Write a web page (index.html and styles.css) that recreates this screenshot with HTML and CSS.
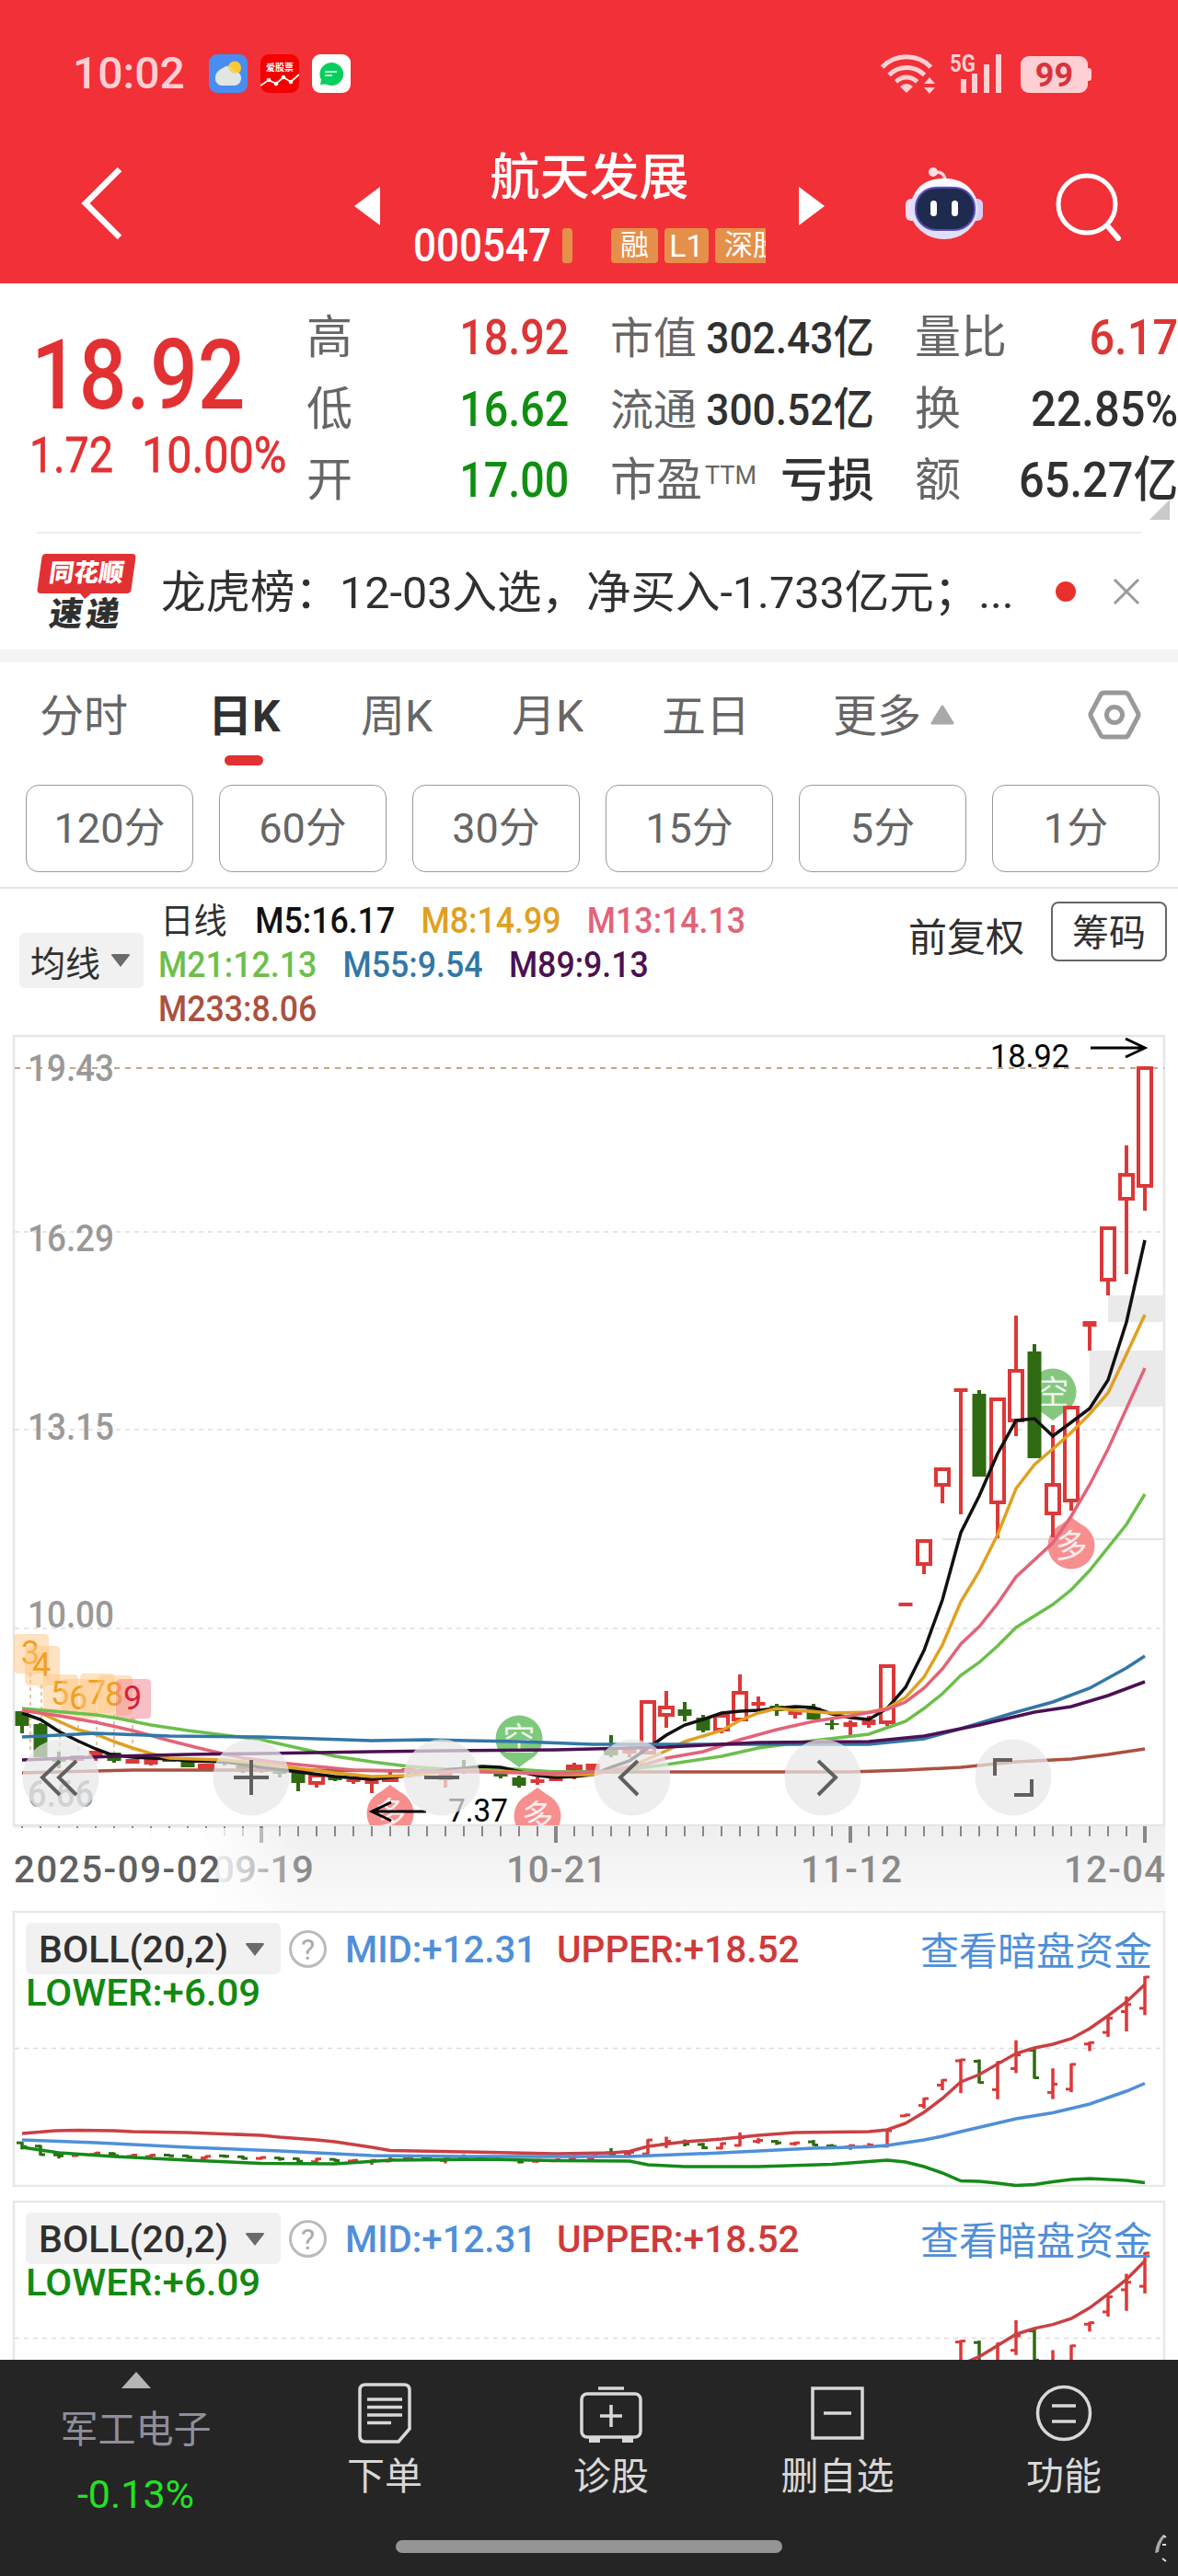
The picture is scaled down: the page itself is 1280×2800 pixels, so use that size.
FILE: index.html
```html
<!DOCTYPE html>
<html lang="zh-CN">

<head>
    <meta charset="UTF-8">
    <meta name="viewport" content="width=device-width, initial-scale=1.0">
    <title>航天发展 000547</title>
    <link rel="stylesheet" href="styles.css">
</head>

<body>

    <header class="top">
        <div class="status">
            <span class="time">10:02</span>
            <svg class="app" viewBox="0 0 42 42">
                <rect width="42" height="42" rx="9" fill="#4a8df0" />
                <circle cx="28" cy="15" r="7" fill="#fdc51f" />
                <path d="M13 34a8 8 0 0 1-6-9c0-5 4-8 8-10 6-5 13-1 13 4 5 0 7 3 7 7s-3 8-7 8z" fill="#dfe6e4" />
                <path d="M21 14a7 7 0 0 1 13-3c2 5-1 8-3 9-5 2-9-1-10-6z" fill="#fcca3a" opacity=".75" />
            </svg>
            <svg class="app" viewBox="0 0 42 42">
                <rect width="42" height="42" rx="9" fill="#f40000" />
                <text x="21" y="17.500" text-anchor="middle" class="app-text">爱股票</text>
                <path d="M0 34l9-6 8 4 8-7 8 5 9-8" fill="none" stroke="#fff" stroke-width="1.800" />
                <circle cx="9" cy="28" r="2.300" fill="#fff" />
                <circle cx="17" cy="32" r="2.300" fill="#fff" />
                <circle cx="25" cy="25" r="2.300" fill="#fff" />
                <circle cx="33" cy="30" r="2.300" fill="#fff" />
            </svg>
            <svg class="app" viewBox="0 0 42 42">
                <rect width="42" height="42" rx="9" fill="#fff" />
                <path d="M21 9a13 12.500 0 1 1-6 23.500L9 33l1-5.500A13 12.500 0 0 1 21 9z" fill="#07cf5c" />
                <path d="M14 19h13M14 23h8" stroke="#fff" stroke-width="1.600" />
            </svg>
            <div class="status-right">
                <svg width="60" height="44" viewBox="0 0 60 44" fill="none" stroke="#ffcfd3" stroke-width="5">
                    <path d="M2.500 15a37 37 0 0 1 53 0M10 23.500a27 27 0 0 1 38.500 0M17.500 31a16 16 0 0 1 23 0" />
                    <path d="M29 43l-7-7q7-6 14 0z" fill="#ffcfd3" stroke="none" />
                    <path d="M54 26l6 7H48zM54 44l6-7H48z" fill="#ffcfd3" stroke="none" />
                </svg>
                <svg class="signal" width="58" height="44" viewBox="0 0 58 44" fill="#ffcfd3">
                    <text x="0" y="20" textLength="28" lengthAdjust="spacingAndGlyphs" class="signal-text">5G</text>
                    <path d="M12 28h6v15h-6zM24 22h6v21h-6zM37 12h6v31h-6zM50 1h6v42h-6z" />
                </svg>
                <span class="battery">99</span>
            </div>
        </div>

        <div class="nav">
            <svg class="back" width="46" height="80" viewBox="0 0 46 80">
                <path d="M42 3L5 40l37 37" fill="none" stroke="#fff" stroke-width="6.500" />
            </svg>
            <svg class="prev" width="28" height="44" viewBox="0 0 28 44"><path d="M0 22L28 1v42z" fill="#fff" /></svg>
            <div class="stock">
                <div class="stock-name">航天发展</div>
                <div class="stock-sub">
                    <span class="code">000547</span>
                    <i class="tag-bar"></i>
                    <div class="tags">
                        <span class="tag">融</span>
                        <span class="tag tag-l1">L1</span>
                        <span class="tag">深股通</span>
                    </div>
                </div>
            </div>
            <svg class="next" width="28" height="44" viewBox="0 0 28 44"><path d="M28 22L0 1v42z" fill="#fff" /></svg>
            <svg class="robot" width="84" height="78" viewBox="0 0 84 78">
                <path d="M30 6q12-3 13 8" fill="none" stroke="#fbd3e0" stroke-width="3.500" />
                <circle cx="30" cy="5" r="5" fill="#fbe0e8" />
                <rect x="0" y="34" width="16" height="24" rx="6" fill="#f3dcf2" />
                <rect x="68" y="34" width="16" height="24" rx="6" fill="#d9cdf6" />
                <ellipse cx="42" cy="45" rx="37" ry="33" fill="#dfdff9" />
                <path d="M8 33C14 16 28 12 42 12s28 5 34 21C67 24 56 20 42 20S17 24 8 33z" fill="#fbf8ff" />
                <rect x="11" y="22" width="64" height="46" rx="22" fill="#1f2b4e" stroke="#5a49b8" stroke-width="2" />
                <rect x="27" y="36" width="7" height="17" rx="3.500" fill="#fff" />
                <rect x="50" y="36" width="7" height="17" rx="3.500" fill="#fff" />
            </svg>
            <svg class="search" width="74" height="76" viewBox="0 0 74 76" fill="none" stroke="#fff" stroke-width="5">
                <circle cx="34" cy="36" r="31" />
                <path d="M56 59l12 14" stroke-width="6" stroke-linecap="round" />
            </svg>
        </div>
    </header>

    <section class="quote">
        <div class="price-box">
            <div class="price"><span class="din">18.92</span></div>
            <div class="change"><span class="din chg">1.72</span><span class="din pct">10.00%</span></div>
        </div>
        <div class="col">
            <div class="row"><span class="lab">高</span><b class="din up">18.92</b></div>
            <div class="row"><span class="lab">低</span><b class="din down">16.62</b></div>
            <div class="row"><span class="lab">开</span><b class="din down">17.00</b></div>
        </div>
        <div class="col mid">
            <div class="row"><span class="lab">市值</span><b class="din">302.43亿</b></div>
            <div class="row"><span class="lab">流通</span><b class="din">300.52亿</b></div>
            <div class="row"><span class="lab big">市盈<small>TTM</small></span><b class="loss">亏损</b></div>
        </div>
        <div class="col last">
            <div class="row"><span class="lab">量比</span><b class="din up">6.17</b></div>
            <div class="row"><span class="lab">换</span><b class="din">22.85%</b></div>
            <div class="row"><span class="lab">额</span><b class="din">65.27亿</b></div>
        </div>
        <svg class="corner" width="22" height="22" viewBox="0 0 22 22"><path d="M22 0v22H0z" fill="#c9c9c9" /></svg>
    </section>

    <section class="news">
        <div class="ths">
            <div class="ths-top">同花顺</div>
            <div class="ths-bottom">速递</div>
        </div>
        <p class="news-text">龙虎榜：12-03入选，净买入-1.733亿元；...</p>
        <i class="dot"></i>
        <svg class="close" width="30" height="30" viewBox="0 0 30 30">
            <path d="M2 2l26 26M28 2L2 28" stroke="#999" stroke-width="3" />
        </svg>
    </section>

    <nav class="tabs">
        <span class="tab">分时</span>
        <span class="tab active">日K</span>
        <span class="tab">周K</span>
        <span class="tab">月K</span>
        <span class="tab">五日</span>
        <span class="tab">更多<svg width="26" height="22" viewBox="0 0 26 22"><path d="M13 2l11 18H2z" fill="#a9a9a9" stroke="#a9a9a9" stroke-width="3" stroke-linejoin="round" /></svg></span>
        <svg class="setting" width="58" height="54" viewBox="0 0 58 54" fill="none" stroke="#999" stroke-width="5">
            <path d="M18 3h22q3 0 4 2l10 19q2 3 0 6L44 49q-1 2-4 2H18q-3 0-4-2L4 30q-2-3 0-6L14 5q1-2 4-2z" />
            <circle cx="29" cy="27" r="8.500" />
        </svg>
    </nav>

    <div class="periods">
        <span>120分</span><span>60分</span><span>30分</span><span>15分</span><span>5分</span><span>1分</span>
    </div>

    <section class="legend">
        <div class="chip ma-chip">均线<i class="caret"></i></div>
        <div class="ma">
            <div><span class="ma-title">日线</span><span class="m5">M5:16.17</span><span class="m8">M8:14.99</span><span class="m13">M13:14.13</span></div>
            <div><span class="m21">M21:12.13</span><span class="m55">M55:9.54</span><span class="m89">M89:9.13</span></div>
            <div><span class="m233">M233:8.06</span></div>
        </div>
        <span class="adjust">前复权</span>
        <span class="chouma">筹码</span>
    </section>

    <!-- K line, svg uses the same coordinates as the screen -->
    <svg class="kline" id="kline" width="1280" height="953" viewBox="0 1124 1280 953"></svg>

    <section class="boll">
        <svg class="boll-svg" width="1280" height="300" viewBox="0 2077 1280 300"></svg>
        <div class="boll-head">
            <span class="chip boll-chip">BOLL(20,2)<i class="caret"></i></span>
            <span class="help">?</span>
            <span class="mid-v">MID:+12.31</span>
            <span class="upper-v">UPPER:+18.52</span>
            <span class="dark">查看暗盘资金</span>
        </div>
        <div class="lower-v">LOWER:+6.09</div>
    </section>

    <section class="boll second">
        <svg class="boll-svg" width="1280" height="300" viewBox="0 2077 1280 300"></svg>
        <div class="boll-head">
            <span class="chip boll-chip">BOLL(20,2)<i class="caret"></i></span>
            <span class="help">?</span>
            <span class="mid-v">MID:+12.31</span>
            <span class="upper-v">UPPER:+18.52</span>
            <span class="dark">查看暗盘资金</span>
        </div>
        <div class="lower-v">LOWER:+6.09</div>
    </section>

    <footer class="bottom">
        <div class="sector">
            <svg width="32" height="18" viewBox="0 0 32 18"><path d="M16 0l16 18H0z" fill="#b5b5b5" /></svg>
            <span class="sector-name">军工电子</span>
            <span class="sector-chg">-0.13%</span>
        </div>
        <div class="item">
            <svg width="58" height="66" viewBox="0 0 58 66" fill="none" stroke="#d8d8d8" stroke-width="3.500">
                <path d="M8 2h42q6 0 6 6v42L44 64H8q-6 0-6-6V8q0-6 6-6zM10 18h38M10 26.500h38M10 35h38M10 43.500h26" />
            </svg>
            <span>下单</span>
        </div>
        <div class="item">
            <svg width="68" height="66" viewBox="0 0 68 66" fill="none" stroke="#d8d8d8" stroke-width="3.500">
                <rect x="2" y="12" width="64" height="47" rx="6" />
                <path d="M20 6h28M22 36h24M34 24v24" />
                <path d="M10 60h12v5H10zM46 60h12v5H46z" fill="#d8d8d8" stroke="none" />
            </svg>
            <span>诊股</span>
        </div>
        <div class="item">
            <svg width="58" height="66" viewBox="0 0 58 66" fill="none" stroke="#d8d8d8" stroke-width="3.500">
                <path d="M2 6h54v54H2zM14 33h30" />
            </svg>
            <span>删自选</span>
        </div>
        <div class="item">
            <svg width="62" height="66" viewBox="0 0 62 66" fill="none" stroke="#d8d8d8" stroke-width="3.500">
                <circle cx="31" cy="33" r="28.500" />
                <path d="M18 25h26M18 42h26" />
            </svg>
            <span>功能</span>
        </div>
        <i class="home-bar"></i>
        <svg class="mark" width="14" height="32" viewBox="0 0 14 32">
            <path d="M10 1Q2 9 1 21l4-1Q6 10 12 3z" fill="#aaa" />
            <path d="M10 2l3 2M9 12h4M9 27l4 3" stroke="#ddd" stroke-width="2" />
        </svg>
    </footer>

    <script src="chart.js"></script>
</body>

</html>
```
FILE: styles.css
```css
* {
    box-sizing: border-box;
}

body {
    margin: 0;
    width: 1280px;
    height: 2800px;
    overflow: hidden;
    position: relative;
    background-color: #fff;
    color: #303030;
    font-family: Roboto, "Noto Sans CJK SC", sans-serif;
}

svg {
    display: block;
    flex-shrink: 0;
}

b,
i {
    font-style: normal;
    font-weight: 500;
}

/* header */
.top {
    height: 308px;
    background-color: #f23037;
    color: #fff;
}

.status {
    display: flex;
    align-items: center;
    height: 160px;
    padding: 0 94px 0 79px;
}

.time {
    width: 148px;
    font-size: 48px;
    font-weight: 500;
    line-height: 60px;
    color: #ffcfd3;
}

.app {
    width: 42px;
    height: 42px;
    margin-right: 14px;
}

.app-text {
    font-size: 10px;
    font-weight: 700;
    fill: #fff;
}

.status-right {
    display: flex;
    align-items: center;
    margin-left: auto;
}

.signal {
    margin: 0 19px 0 16px;
}

.signal-text {
    font-size: 26px;
    font-weight: 700;
}

.battery {
    position: relative;
    width: 73px;
    height: 40px;
    margin: 2px 4px 0 0;
    border-radius: 9px;
    background-color: #ffcfd3;
    color: #d9323c;
    font-size: 36px;
    font-weight: 700;
    line-height: 42px;
    text-align: center;
}

.battery::after {
    content: "";
    position: absolute;
    right: -4px;
    top: 13px;
    width: 4px;
    height: 14px;
    border-radius: 0 3px 3px 0;
    background-color: #ffcfd3;
}

.nav {
    display: flex;
    align-items: flex-start;
    height: 148px;
}

.back {
    margin: 21px 0 0 88px;
}

.prev {
    margin: 42px 0 0 251px;
}

.stock {
    width: 383px;
    margin: 2px 36px 0 36px;
}

.stock-name {
    height: 64px;
    font-size: 54px;
    font-weight: 500;
    line-height: 64px;
    text-align: center;
}

.stock-sub {
    display: flex;
    align-items: center;
    height: 54px;
    margin-top: 14px;
}

.code {
    width: 162px;
    font-size: 50px;
    font-weight: 500;
    line-height: 54px;
    transform: scaleX(.88);
    transform-origin: left;
}

.tag-bar {
    width: 11px;
    height: 38px;
    border-radius: 3px 4px 4px 3px;
    background-color: #e5904a;
}

.tags {
    display: flex;
    gap: 7px;
    width: 168px;
    margin-left: 42px;
    overflow: hidden;
}

.tag {
    flex-shrink: 0;
    height: 38px;
    padding: 0 10px;
    border-radius: 4px;
    background-color: #e5904a;
    font-size: 31px;
    line-height: 38px;
}

.tag-l1 {
    width: 48px;
    padding: 0;
    font-size: 34px;
    text-align: center;
}

.next {
    margin: 42px 0 0 0;
}

.robot {
    margin: 22px 0 0 88px;
}

.search {
    margin: 26px 0 0 79px;
}

/* quote */
.quote {
    position: relative;
    display: flex;
    height: 272px;
    padding-top: 21px;
}

.quote::after {
    content: "";
    position: absolute;
    left: 40px;
    right: 40px;
    bottom: 0;
    height: 2px;
    background-color: #ececec;
}

.din {
    display: inline-block;
    transform: scaleX(.88);
    transform-origin: right;
    white-space: nowrap;
}

.price-box {
    width: 333px;
    padding-top: 25px;
    color: #e23133;
}

.price-box .din {
    transform-origin: left;
    font-weight: 500;
}

.price {
    height: 108px;
    padding-left: 34px;
    font-size: 106px;
    line-height: 108px;
}

.price .din {
    transform: scaleX(.86);
}

.change {
    display: flex;
    height: 66px;
    padding-left: 32px;
    font-size: 53px;
    line-height: 66px;
}

.chg {
    width: 122px;
}

.price-box .change .din {
    font-weight: 400;
    -webkit-text-stroke: .8px #e23133;
}

.price-box .change .pct {
    transform: scaleX(.915);
}

.col {
    width: 285px;
    margin-right: 45px;
}

.col.mid {
    width: 287px;
    margin-right: 44px;
}

.col.last {
    width: 286px;
    margin-right: 0;
}

.row {
    display: flex;
    justify-content: space-between;
    height: 77.5px;
    font-size: 53px;
    line-height: 77px;
    white-space: nowrap;
}

.lab {
    font-size: 50px;
    color: #666;
}

.mid .din {
    margin-left: -20px;
    font-size: 49px;
    transform: scaleX(.905);
}

.last .din {
    transform: scaleX(.92);
}

.mid .lab {
    font-size: 47px;
}

.mid .lab.big {
    font-size: 50px;
}

.lab small {
    font-size: 27px;
    position: relative;
    top: -13px;
    margin-left: 3px;
}

.loss {
    font-size: 51px;
}

.up {
    color: #dc3535;
}

.down {
    color: #0f8f0f;
}

.corner {
    position: absolute;
    right: 9px;
    bottom: 15px;
}

/* news */
.news {
    display: flex;
    align-items: center;
    height: 140px;
    padding-left: 43px;
    border-bottom: 14px solid #f4f4f4;
}

.ths {
    width: 102px;
    height: 82px;
    margin-right: 30px;
    font-weight: 900;
    text-align: center;
}

.ths-top {
    position: relative;
    height: 43px;
    color: #fff;
    font-size: 27px;
    line-height: 42px;
    background-color: #e23133;
    border-radius: 4px;
    transform: skewX(-8deg);
}

.ths-top::after {
    content: "";
    position: absolute;
    left: 46px;
    bottom: -6px;
    border-left: 7px solid transparent;
    border-right: 7px solid transparent;
    border-top: 7px solid #e23133;
}

.ths-bottom {
    font-size: 36px;
    line-height: 46px;
    letter-spacing: 4px;
    transform: skewX(-8deg);
}

.news-text {
    width: 932px;
    margin: 4px 40px 0 0;
    font-size: 48.500px;
    line-height: 60px;
    white-space: nowrap;
    flex-shrink: 0;
}

.dot {
    width: 22px;
    height: 22px;
    border-radius: 50%;
    background-color: #e9302d;
}

.close {
    margin-left: 40px;
}

/* tabs */
.tabs {
    display: grid;
    grid-template-columns: 183px 166px 164px 163px 186px 277px 58px;
    align-items: center;
    height: 118px;
    padding-left: 43px;
    font-size: 48px;
    line-height: 60px;
    color: #666;
}

.tab {
    position: relative;
    white-space: nowrap;
}

.tab svg {
    display: inline-block;
    margin-left: 10px;
    vertical-align: 7px;
}

.tab.active {
    color: #303030;
    font-weight: 700;
}

.tab.active::after {
    content: "";
    position: absolute;
    left: 18px;
    bottom: -23px;
    width: 42px;
    height: 11px;
    border-radius: 6px;
    background-color: #e23133;
}

.setting {
    margin-top: -5px;
}

.periods {
    display: grid;
    grid-template-columns: repeat(6, 1fr);
    gap: 28px;
    height: 128px;
    padding: 15px 20px 24px 28px;
    border-bottom: 2px solid #e4e4e4;
}

.periods span {
    border: 1.500px solid #999;
    border-radius: 14px;
    color: #666;
    font-size: 45px;
    line-height: 93px;
    text-align: center;
}

/* ma legend */
.legend {
    position: relative;
    display: flex;
    height: 158px;
    padding-left: 21px;
}

.chip {
    display: flex;
    align-items: center;
    background-color: #f1f1f1;
    border-radius: 6px;
}

.caret {
    border-left: 11px solid transparent;
    border-right: 11px solid transparent;
    border-top: 14px solid #6a6a6a;
    border-radius: 3px;
}

.ma-chip {
    width: 135px;
    height: 60px;
    margin-top: 48px;
    padding-left: 12px;
    font-size: 38px;
}

.ma-chip .caret {
    margin-left: 11px;
}

.ma {
    width: 730px;
    padding: 11px 0 0 0;
    margin-left: 16px;
    font-size: 39px;
    font-weight: 500;
    line-height: 48px;
    white-space: nowrap;
    transform: scaleX(.915);
    transform-origin: left;
}

.ma span {
    margin-right: 31px;
}

.ma .ma-title {
    display: inline-block;
    margin: 0 35px 0 4px;
    font-size: 38px;
    font-weight: 400;
    transform: scaleX(1.04);
}

.m5 {
    color: #111;
}

.m8 {
    color: #e0a020;
}

.m13 {
    color: #e2637a;
}

.m21 {
    color: #6cbf4b;
}

.m55 {
    color: #3277a6;
}

.m89 {
    color: #4b1152;
}

.m233 {
    color: #ab5140;
}

.adjust {
    margin: 24px 29px 0 85px;
    font-size: 42px;
    line-height: 60px;
    white-space: nowrap;
}

.chouma {
    width: 126px;
    height: 65px;
    margin-top: 14px;
    border: 2px solid #666;
    border-radius: 8px;
    font-size: 40px;
    line-height: 66px;
    text-align: center;
}

/* charts */
.axis {
    font-size: 40px;
    font-weight: 500;
    fill: #999;
}

.date {
    fill: #8a8a8a;
}

.date.first {
    fill: #606060;
}

.note {
    font-size: 35px;
    fill: #000;
}

.turn {
    font-size: 36px;
    text-anchor: middle;
}

.pin {
    font-size: 35px;
    fill: #fff;
    text-anchor: middle;
    opacity: .85;
}

.boll {
    position: relative;
    height: 315px;
    padding: 13px 30px 0 28px;
    font-size: 41px;
    color: #303030;
}

.boll-svg {
    position: absolute;
    left: 0;
    top: 0;
}

.boll-head {
    position: relative;
    display: flex;
    align-items: center;
    height: 56px;
    white-space: nowrap;
}

.boll-chip {
    width: 277px;
    height: 56px;
    padding: 2px 0 0 14px;
    font-weight: 500;
}

.boll-chip .caret {
    margin-left: auto;
    margin-right: 17px;
}

.help {
    width: 41px;
    height: 41px;
    margin: 0 20px 0 9px;
    border: 3px solid #bbb;
    border-radius: 50%;
    color: #aaa;
    font-size: 32px;
    line-height: 37px;
    text-align: center;
}

.mid-v,
.upper-v,
.lower-v {
    font-weight: 500;
    transform-origin: left;
}

.mid-v {
    width: 230px;
    padding-top: 2px;
    color: #4f8fd9;
    transform: scaleX(.98);
}

.upper-v {
    padding-top: 2px;
    color: #cf3a3a;
    transform: scaleX(.99);
}

.dark {
    margin: -2px -2px 0 auto;
    color: #4f8fd9;
    font-size: 42px;
}

.lower-v {
    position: relative;
    font-size: 41px;
    line-height: 40px;
    color: #128a12;
    transform: scaleX(1.025);
}

/* bottom bar */
.bottom {
    position: absolute;
    left: 0;
    top: 2565px;
    width: 1280px;
    height: 235px;
    display: grid;
    grid-template-columns: 295px repeat(4, 246px);
    background-color: #252525;
    color: #d8d8d8;
    font-size: 41px;
}

.sector,
.item {
    display: flex;
    flex-direction: column;
    align-items: center;
}

.sector svg {
    margin-top: 13px;
}

.sector-name {
    margin-top: 15px;
    line-height: 60px;
    color: #8f8f9b;
}

.sector-chg {
    margin-top: 10px;
    font-size: 43px;
    line-height: 60px;
    color: #23e223;
}

.item svg {
    margin-top: 25px;
}

.item span {
    margin-top: 6px;
    line-height: 60px;
}

.home-bar {
    position: absolute;
    left: 430px;
    bottom: 25px;
    width: 420px;
    height: 14px;
    border-radius: 7px;
    background-color: #959595;
}

.mark {
    position: absolute;
    right: 12px;
    bottom: 14px;
}
```
FILE: chart.js
```js
const RED = "#dc3838";
const GREEN = "#2f6a12";

// type, body top, body bottom, high, low
// h = hollow red, r = solid red, g = green
const candles = [
    ["g", 1860, 1876, 1860, 1884], ["g", 1874, 1910, 1873, 1910], ["g", 1911, 1915, 1904, 1922],
    ["r", 1908, 1914, 1908, 1914], ["r", 1903, 1909, 1903, 1914], ["g", 1905, 1914, 1905, 1916],
    ["r", 1912, 1917, 1912, 1917], ["r", 1912, 1918, 1912, 1919], ["g", 1912, 1915, 1912, 1915],
    ["g", 1915, 1921, 1915, 1921], ["h", 1917, 1924, 1917, 1924], ["g", 1915, 1917, 1914, 1919],
    ["g", 1919, 1926, 1918, 1927], ["r", 1922, 1926, 1922, 1927], ["g", 1924, 1928, 1924, 1932],
    ["g", 1927, 1938, 1927, 1947], ["h", 1928, 1940, 1928, 1943], ["g", 1930, 1935, 1930, 1936],
    ["r", 1934, 1937, 1934, 1939], ["r", 1934, 1939, 1934, 1949], ["h", 1931, 1937, 1925, 1937],
    ["r", 1922, 1926, 1921, 1928], ["g", 1921, 1926, 1921, 1926], ["r", 1927, 1935, 1923, 1943],
    ["g", 1923, 1926, 1913, 1928], ["g", 1922, 1925, 1922, 1925], ["g", 1928, 1931, 1928, 1933],
    ["g", 1932, 1941, 1930, 1943], ["r", 1934, 1938, 1932, 1940], ["r", 1932, 1936, 1932, 1936],
    ["h", 1918, 1924, 1916, 1934], ["r", 1917, 1928, 1917, 1928], ["g", 1902, 1908, 1886, 1910],
    ["r", 1900, 1906, 1898, 1910], ["h", 1848, 1907, 1848, 1907], ["h", 1854, 1866, 1838, 1878],
    ["g", 1858, 1865, 1850, 1871], ["g", 1867, 1881, 1864, 1883], ["h", 1863, 1882, 1863, 1884],
    ["h", 1838, 1871, 1820, 1871], ["r", 1850, 1854, 1844, 1859], ["g", 1854, 1860, 1852, 1865],
    ["r", 1860, 1864, 1860, 1868], ["g", 1856, 1869, 1852, 1869], ["g", 1873, 1875, 1869, 1880],
    ["r", 1872, 1877, 1870, 1886], ["r", 1869, 1875, 1865, 1878], ["h", 1809, 1874, 1809, 1876],
    ["r", 1742, 1746, 1742, 1746], ["h", 1673, 1702, 1673, 1711], ["h", 1595, 1616, 1595, 1634],
    ["r", 1509, 1513, 1509, 1646], ["g", 1515, 1605, 1511, 1605], ["h", 1519, 1635, 1519, 1672],
    ["h", 1488, 1546, 1430, 1561], ["g", 1469, 1585, 1461, 1585], ["h", 1612, 1647, 1549, 1671],
    ["h", 1528, 1633, 1528, 1642], ["r", 1436, 1442, 1436, 1468], ["h", 1333, 1393, 1333, 1408],
    ["h", 1275, 1305, 1245, 1385], ["h", 1159, 1291, 1159, 1316]
];

const lines = {
    "#ab5140": "24,1927 144,1924 324,1924 604,1926 924,1926 984,1924 1044,1921 1104,1915 1164,1912 1204,1907 1244,1901",
    "#6cbf4b": "24,1857 104,1864 124,1867 164,1875 204,1881 284,1891 324,1900 364,1909 404,1915 444,1920 484,1923 544,1922 604,1926 664,1926 724,1918 784,1909 824,1900 884,1892 944,1885 984,1871 1004,1857 1024,1841 1044,1821 1064,1807 1084,1789 1104,1769 1144,1744 1164,1728 1184,1707 1224,1657 1244,1624",
    "#111": "24,1862 44,1869 64,1882 84,1892 104,1901 120,1907 144,1910 184,1912 204,1914 244,1915 284,1921 324,1926 364,1931 404,1934 444,1930 484,1924 524,1920 544,1921 584,1930 604,1932 624,1931 644,1929 664,1921 684,1914 704,1900 724,1886 744,1875 764,1869 784,1862 804,1860 824,1859 844,1857 864,1855 884,1856 904,1863 924,1867 944,1869 964,1857 984,1834 1004,1794 1024,1739 1044,1666 1064,1626 1084,1580 1104,1544 1124,1542 1144,1561 1164,1546 1184,1531 1204,1500 1224,1437 1244,1348",
    "#e0a020": "24,1859 44,1862 64,1871 84,1880 104,1885 124,1893 144,1900 164,1906 184,1911 244,1913 284,1917 324,1922 364,1927 404,1931 444,1930 504,1924 544,1925 604,1929 644,1929 684,1920 704,1912 724,1903 744,1893 764,1887 784,1881 804,1870 824,1862 844,1857 864,1859 904,1862 944,1861 964,1857 984,1845 1004,1823 1024,1788 1044,1741 1064,1708 1084,1668 1104,1618 1124,1592 1144,1575 1164,1557 1184,1537 1204,1514 1224,1472 1244,1429",
    "#e2637a": "24,1859 44,1862 64,1865 104,1872 144,1881 184,1892 224,1902 264,1911 304,1916 344,1920 384,1924 444,1925 524,1926 604,1928 664,1925 704,1917 724,1911 764,1904 804,1891 844,1880 884,1871 924,1865 964,1858 984,1850 1004,1835 1024,1814 1044,1787 1064,1768 1084,1743 1104,1714 1144,1677 1164,1648 1184,1614 1204,1575 1244,1487",
    "#3277a6": "24,1888 104,1884 184,1887 284,1888 404,1892 464,1891 564,1893 644,1896 844,1896 944,1896 1004,1890 1044,1879 1104,1861 1144,1850 1184,1835 1224,1813 1244,1800",
    "#4b1152": "24,1913 124,1909 204,1907 284,1906 404,1904 484,1903 604,1902 724,1899 824,1894 944,1893 1004,1887 1064,1875 1124,1861 1164,1855 1204,1843 1244,1828"
};

const upper = "24,2319 60,2316 84,2315.5 124,2316 144,2317 204,2318 284,2321 304,2323 344,2326 364,2328 404,2334 424,2337.5 504,2339 604,2341 664,2340 684,2338.5 704,2333 744,2328 784,2325 824,2321 864,2318 944,2317 964,2315 984,2308 1004,2296 1024,2281 1044,2263 1064,2255 1104,2232 1124,2226 1144,2222 1164,2216 1184,2205 1204,2191 1224,2176 1244,2157";
const mid = "24,2326 104,2329 204,2334 304,2338 404,2343 504,2344 644,2344 684,2344 784,2340 884,2335 944,2333.5 964,2332 1004,2326 1024,2322 1044,2317 1104,2303 1144,2296.5 1184,2287 1224,2273 1244,2264.5";
const lower = "24,2334 64,2340 124,2344 204,2348 284,2351.5 364,2352 424,2348 524,2347 604,2348.5 684,2349 704,2353 744,2355 824,2355 904,2352.5 944,2349.5 964,2348 984,2350 1004,2355 1024,2362 1044,2370.5 1064,2371 1084,2373 1104,2375.5 1124,2374.5 1144,2371.5 1164,2369 1184,2368 1204,2369 1224,2370 1244,2372.5";

const xAt = i => 24 + i * 20;

function line(x1, y1, x2, y2, color, width, dash) {
    return `<line x1="${x1}" y1="${y1}" x2="${x2}" y2="${y2}" stroke="${color}" stroke-width="${width}" ${dash ? `stroke-dasharray="${dash}"` : ""}/>`;
}

function poly(points, color, width) {
    return `<polyline points="${points}" fill="none" stroke="${color}" stroke-width="${width}"/>`;
}

function drawCandle(c, i) {
    const [type, top, bottom, high, low] = c;
    const x = xAt(i);
    const color = type === "g" ? GREEN : RED;
    let s = "";
    if (high < top) s += line(x, high, x, top, color, 4);
    if (low > bottom) s += line(x, bottom, x, low, color, 4);
    if (type === "h") {
        s += `<rect x="${x - 7}" y="${top + 2}" width="14" height="${bottom - top - 4}" fill="#fff" stroke="${color}" stroke-width="4"/>`;
    } else {
        s += `<rect x="${x - 7.5}" y="${top}" width="15" height="${bottom - top}" fill="${color}"/>`;
    }
    return s;
}

// balloon with the tip at (x, y), dir 1 = tip on top
function pin(x, y, dir, text, color) {
    const cy = y + dir * 31;
    return `<path d="M${x} ${y}L${x - 15} ${y + dir * 11}H${x + 15}z" fill="${color}"/>
        <circle cx="${x}" cy="${cy}" r="25.5" fill="${color}"/>
        <text x="${x}" y="${cy + 13}" class="pin">${text}</text>`;
}

function turn(x, y, text, red) {
    const color = red ? "#f2808a" : "#fdc583";
    return line(x, y + 20, x, 1905, "#d9b38a", 1.5, "4 4") +
        `<path d="M${x - 18} ${y - 17}q0-5 5-5h28q5 0 5 5v33q0 5-5 5h-10l-5 5-5-5h-8q-5 0-5-5z" fill="${color}" opacity=".5"/>
        <text x="${x}" y="${y + 11}" class="turn" fill="${red ? "#d92038" : "#f0a020"}">${text}</text>`;
}

function drawKline() {
    let s = `<defs>
        <linearGradient id="band" x1="0" y1="0" x2="0" y2="1"><stop offset="0" stop-color="#efefef"/><stop offset="1" stop-color="#fafafa"/></linearGradient>
        <linearGradient id="fade"><stop offset="0" stop-color="#fff"/><stop offset=".68" stop-color="#fff" stop-opacity=".97"/><stop offset="1" stop-color="#fff" stop-opacity="0"/></linearGradient>
        <clipPath id="box"><rect x="15" y="1124" width="1251" height="860"/></clipPath>
    </defs>`;
    s += `<rect x="15" y="1985" width="1251" height="92" fill="url(#band)"/>`;
    s += `<rect x="15" y="1126" width="1250" height="858" fill="#fff" stroke="#e6e6e6" stroke-width="2.5"/>`;
    s += line(16, 1161, 1265, 1161, "#c0a88a", 1.8, "6 6");
    [1339, 1554, 1770].forEach(y => s += line(16, y, 1265, y, "#dedede", 1.5, "5 5"));
    s += `<rect x="1204" y="1408" width="61" height="29" fill="#eaeaea"/><rect x="1184" y="1468" width="81" height="61" fill="#eaeaea"/>`;
    s += line(1024, 1673, 1265, 1673, "#e4e4e4", 2);

    s += `<text x="30" y="1175" class="axis" textLength="94" lengthAdjust="spacingAndGlyphs">19.43</text>
        <text x="30" y="1360" class="axis" textLength="94" lengthAdjust="spacingAndGlyphs">16.29</text>
        <text x="30" y="1565" class="axis" textLength="94" lengthAdjust="spacingAndGlyphs">13.15</text>
        <text x="30" y="1769" class="axis" textLength="94" lengthAdjust="spacingAndGlyphs">10.00</text>
        <text x="30" y="1964" class="axis" textLength="72" lengthAdjust="spacingAndGlyphs">6.66</text>`;

    s += `<g clip-path="url(#box)">`;
    s += pin(1144, 1544, -1, "空", "#85c77f") + pin(1164, 1649, 1, "多", "#f78f8f");
    s += pin(564, 1921, -1, "空", "#7fc97c") + pin(424, 1940, 1, "多", "#f78f8f") + pin(584, 1943, 1, "多", "#f78f8f");
    s += turn(33, 1798, "3") + turn(45, 1811, "4") + turn(65, 1842, "5") + turn(85, 1847, "6") + turn(105, 1841, "7") + turn(124, 1843, "8") + turn(144, 1847, "9", true);
    candles.forEach((c, i) => s += drawCandle(c, i));
    for (const color in lines) s += poly(lines[color], color, 3.5);
    s += `</g>`;

    s += `<text x="1076" y="1160" class="note" textLength="86" lengthAdjust="spacingAndGlyphs">18.92</text>`;
    s += `<path d="M1185 1139H1243M1223 1129L1244 1139L1223 1149" fill="none" stroke="#000" stroke-width="3"/>`;
    s += `<text x="487" y="1980" class="note" textLength="65" lengthAdjust="spacingAndGlyphs">7.37</text>`;
    s += `<path d="M463 1969H405M425 1959L404 1969L425 1979" fill="none" stroke="#000" stroke-width="3"/>`;

    // round tool buttons
    [66, 273, 480, 687, 894, 1101].forEach(x => s += `<circle cx="${x}" cy="1932" r="41.5" fill="#e7e7e7" opacity=".72"/>`);
    s += `<path d="M65 1914L46 1932L65 1951M83 1914L64 1932L83 1951M254 1932H292M273 1913V1951M461 1932H499
        M693 1914L674 1932L693 1951M889 1914L908 1932L889 1951M1081 1930V1913H1100M1121 1934V1951H1102"
        fill="none" stroke="#606060" stroke-width="4"/>`;

    // date axis
    for (let i = 0; i < candles.length; i++) {
        const big = [13, 29, 45, 61].includes(i);
        s += line(xAt(i), 1985, xAt(i), big ? 2003 : 1996, "#888", big ? 4 : 2);
    }
    s += `<text x="231" y="2046" class="axis date" textLength="110" lengthAdjust="spacingAndGlyphs">09-19</text>`;
    s += `<rect x="0" y="1987" width="330" height="90" fill="url(#fade)"/>`;
    s += `<text x="15" y="2046" class="axis date first" textLength="224">2025-09-02</text>
        <text x="550" y="2046" class="axis date" textLength="109">10-21</text>
        <text x="870" y="2046" class="axis date" textLength="110">11-12</text>
        <text x="1156" y="2046" class="axis date" textLength="110">12-04</text>`;
    document.getElementById("kline").innerHTML = s;
}

function drawBoll(svg, index) {
    // the second panel has a slightly larger scale
    const fit = y => index === 0 ? y : 2133 + (y - 2148) * 1.062;
    const scale = pts => pts.split(" ").map(p => {
        const [x, y] = p.split(",").map(Number);
        return x + "," + fit(y);
    }).join(" ");
    const py = y => fit(2149 + (y - 1159) * 0.257);

    let s = `<rect x="15" y="2078" width="1250" height="298" fill="#fff" stroke="#e8e8e8" stroke-width="2.5"/>`;
    s += line(16, 2226.5, 1265, 2226.5, "#dcdcdc", 1.5, "5 5");
    candles.forEach((c, i) => {
        const [type, top, bottom, high, low] = c;
        const x = xAt(i);
        const green = type === "g";
        const color = green ? GREEN : RED;
        s += line(x, py(high) - 1, x, py(low) + 1, color, 3.5);
        s += line(x - 6, py(green ? top : bottom), x, py(green ? top : bottom), color, 3);
        s += line(x, py(green ? bottom : top), x + 5, py(green ? bottom : top), color, 3);
    });
    s += poly(scale(upper), "#c94043", 3.5) + poly(scale(mid), "#4f8fd9", 3.5) + poly(scale(lower), "#148a18", 3.5);
    svg.innerHTML = s;
}

drawKline();
document.querySelectorAll(".boll-svg").forEach(drawBoll);
```
